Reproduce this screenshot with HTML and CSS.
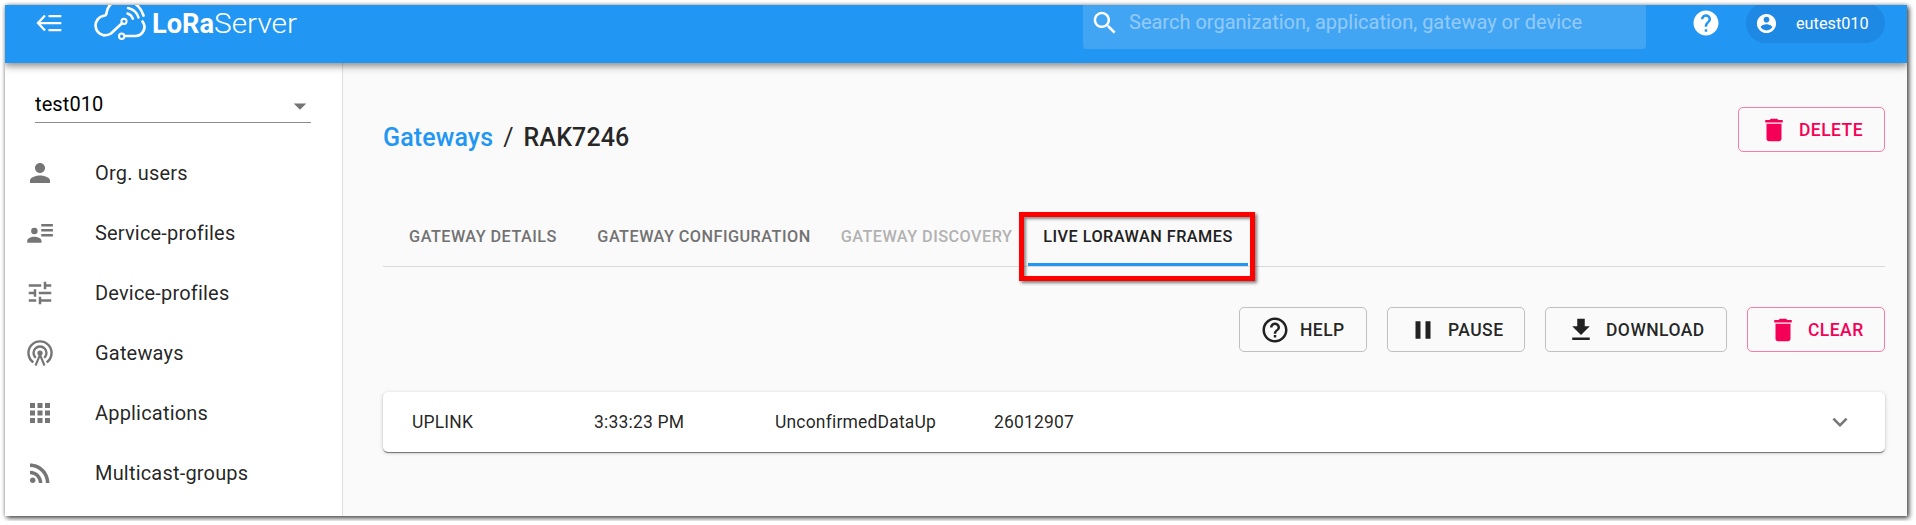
FILE: index.html
```html
<!DOCTYPE html>
<html lang="en">
<head>
<meta charset="utf-8">
<title>LoRaServer</title>
<link rel="stylesheet" href="styles.css">
</head>
<body>
<div class="window">
  <header class="topbar">
    <svg class="icon menu" viewBox="0 0 30 30" fill="none" stroke="#fff" stroke-width="2.3"><path d="M11 7.500L4 15l7 7.500M4 15.200H27.300M14.500 8.200H27.300M14.500 22.200H27.300"/></svg>
    <div class="logo">
      <svg class="cloud" viewBox="0 0 56 42" fill="none" stroke="#fff" stroke-linecap="round">
        <path stroke-width="2.700" d="M30 23.300L19 33.500Q16.500 35.300 12 35.300A9.900 9.900 0 0 1 11.500 15.800Q14.300 15.800 14.500 13C15.500 7 18.500 3 24 1.500C38 -1 48 4 51.500 15.500"/>
        <path stroke-width="2.700" d="M33 36H43.500A9 9 0 0 0 50.500 21.500"/>
        <path stroke-width="2.500" d="M35.500 13.500Q39.500 14.700 40.800 18.700M36 8Q44.500 10 46.500 17.500"/>
        <circle cx="32" cy="21.300" r="2.600" stroke-width="2"/><circle cx="29.700" cy="36.300" r="2.700" stroke-width="2"/>
      </svg>
      <svg class="wordmark" viewBox="0 0 146 34"><text class="word-bold" x="0" y="25.500" textLength="62" lengthAdjust="spacingAndGlyphs">LoRa</text><text class="word-light" x="62" y="25.500" textLength="83" lengthAdjust="spacingAndGlyphs">Server</text></svg>
    </div>
    <div class="search">
      <svg class="icon" viewBox="0 0 24 24"><path d="M15.500 14h-.79l-.28-.27C15.410 12.590 16 11.110 16 9.500 16 5.910 13.090 3 9.500 3S3 5.910 3 9.500 5.910 16 9.500 16c1.610 0 3.090-.59 4.230-1.570l.27.28v.79l5 4.990L20.490 19l-4.990-5zm-6 0C7.010 14 5 11.990 5 9.500S7.010 5 9.500 5 14 7.010 14 9.500 11.990 14 9.500 14z"/></svg>
      <span>Search organization, application, gateway or device</span>
    </div>
    <svg class="icon help" viewBox="0 0 24 24"><path d="M12 2C6.480 2 2 6.480 2 12s4.480 10 10 10 10-4.480 10-10S17.520 2 12 2zm1 17h-2v-2h2v2zm2.070-7.750l-.9.920C13.450 12.900 13 13.500 13 15h-2v-.5c0-1.100.45-2.100 1.170-2.830l1.240-1.260c.37-.36.59-.86.59-1.410 0-1.100-.9-2-2-2s-2 .9-2 2H8c0-2.210 1.790-4 4-4s4 1.790 4 4c0 .88-.36 1.680-.93 2.250z"/></svg>
    <div class="chip">
      <svg class="avatar" viewBox="0 0 24 24"><path d="M12 2C6.480 2 2 6.480 2 12s4.480 10 10 10 10-4.480 10-10S17.520 2 12 2zm0 3c1.660 0 3 1.340 3 3s-1.340 3-3 3-3-1.340-3-3 1.340-3 3-3zm0 14.200c-2.500 0-4.710-1.280-6-3.220.03-1.990 4-3.080 6-3.080 1.990 0 5.970 1.090 6 3.080-1.290 1.940-3.500 3.220-6 3.220z"/></svg>
      <span>eutest010</span>
    </div>
  </header>
  <div class="body">
    <nav class="sidebar">
      <div class="select"><span>test010</span><svg class="icon" viewBox="0 0 24 24"><path d="M7 10l5 5 5-5z"/></svg></div>
      <ul class="menu-list">
        <li><svg class="icon" viewBox="0 0 24 24"><path d="M12 12c2.210 0 4-1.790 4-4s-1.790-4-4-4-4 1.790-4 4 1.790 4 4 4zm0 2c-2.670 0-8 1.340-8 4v2h16v-2c0-2.660-5.330-4-8-4z"/></svg>Org. users</li>
        <li><svg class="icon" viewBox="0 0 24 24"><path d="M13 4.700h9.300v2H13zM13 8.700h9.300v2H13zM13 12.700h9.300v2H13zM7.500 7.700A2.600 2.600 0 1 0 7.500 12.900 2.600 2.600 0 1 0 7.500 7.700zM1.800 19.700v-1.600c0-2 3.700-3.100 5.700-3.100s5.700 1.100 5.700 3.100v1.600z"/></svg>Service-profiles</li>
        <li><svg class="icon" viewBox="0 0 24 24"><path d="M3 17v2h6v-2H3zM3 5v2h10V5H3zm10 16v-2h8v-2h-8v-2h-2v6h2zM7 9v2H3v2h4v2h2V9H7zm14 4v-2H11v2h10zm-6-4h2V7h4V5h-4V3h-2v6z"/></svg>Device-profiles</li>
        <li><svg class="icon" viewBox="0 0 24 24"><g fill="none" stroke="currentColor"><path stroke-width="1.900" d="M6.700 19.500A9.250 9.250 0 1 1 17.300 19.500M8.600 15.900A5.200 5.200 0 1 1 15.400 15.900"/><path stroke-width="1.700" d="M8.400 22L12 13.500 15.600 22"/></g><circle cx="12" cy="12" r="2.100"/></svg>Gateways</li>
        <li><svg class="icon" viewBox="0 0 24 24"><path d="M4 8h4V4H4v4zm6 12h4v-4h-4v4zm-6 0h4v-4H4v4zm0-6h4v-4H4v4zm6 0h4v-4h-4v4zm6-10v4h4V4h-4zm-6 4h4V4h-4v4zm6 6h4v-4h-4v4zm0 6h4v-4h-4v4z"/></svg>Applications</li>
        <li><svg class="icon" viewBox="0 0 24 24"><circle cx="6.180" cy="17.820" r="2.180"/><path d="M4 4.440v2.830c7.030 0 12.730 5.700 12.730 12.730h2.830c0-8.590-6.970-15.560-15.560-15.560zm0 5.660v2.830c3.900 0 7.070 3.170 7.070 7.070h2.830c0-5.470-4.430-9.900-9.900-9.900z"/></svg>Multicast-groups</li>
      </ul>
    </nav>
    <main class="content">
      <div class="title-row">
        <h1><a>Gateways</a><span class="slash">/</span>RAK7246</h1>
        <button class="btn danger w-delete"><svg class="icon" viewBox="0 0 24 24"><path d="M6 19c0 1.100.9 2 2 2h8c1.100 0 2-.9 2-2V7H6v12zM19 4h-3.500l-1-1h-5l-1 1H5v2h14V4z"/></svg>Delete</button>
      </div>
      <div class="tabs">
        <div class="tab t1">Gateway details</div>
        <div class="tab t2">Gateway configuration</div>
        <div class="tab t3">Gateway discovery</div>
        <div class="tab t4">Live LoRaWAN frames<div class="marker"></div></div>
      </div>
      <div class="actions">
        <button class="btn w-help"><svg class="icon" viewBox="0 0 24 24"><path d="M11 18h2v-2h-2v2zm1-16C6.480 2 2 6.480 2 12s4.480 10 10 10 10-4.480 10-10S17.520 2 12 2zm0 18c-4.410 0-8-3.590-8-8s3.590-8 8-8 8 3.590 8 8-3.590 8-8 8zm0-14c-2.210 0-4 1.790-4 4h2c0-1.100.9-2 2-2s2 .9 2 2c0 2-3 1.750-3 5h2c0-2.250 3-2.500 3-5 0-2.210-1.790-4-4-4z"/></svg>Help</button>
        <button class="btn w-pause"><svg class="icon" viewBox="0 0 24 24"><path d="M6 19h4V5H6v14zm8-14v14h4V5h-4z"/></svg>Pause</button>
        <button class="btn w-download"><svg class="icon" viewBox="0 0 24 24"><path d="M19 9h-4V3H9v6H5l7 7 7-7zM5 18v2h14v-2H5z"/></svg>Download</button>
        <button class="btn danger w-pause"><svg class="icon" viewBox="0 0 24 24"><path d="M6 19c0 1.100.9 2 2 2h8c1.100 0 2-.9 2-2V7H6v12zM19 4h-3.500l-1-1h-5l-1 1H5v2h14V4z"/></svg>Clear</button>
      </div>
      <div class="frame-row">
        <span>UPLINK</span><span>3:33:23 PM</span><span>UnconfirmedDataUp</span><span>26012907</span>
        <svg class="icon" viewBox="0 0 24 24"><path d="M16.590 8.590L12 13.170 7.410 8.590 6 10l6 6 6-6z"/></svg>
      </div>
    </main>
  </div>
</div>
</body>
</html>
```
FILE: styles.css
```css
*, *::after { box-sizing: border-box; }
body { margin: 0; padding: 5px; background: #fff; font-family: Roboto, "Liberation Sans", sans-serif; color: rgba(0,0,0,.87); overflow: hidden; }
.window { width: 1902px; height: 511px; overflow: hidden; background: #fafafa; display: flex; flex-direction: column; box-shadow: 2px 2px 5px rgba(0,0,0,.7), 0 0 4px rgba(0,0,0,.3); }
.icon { width: 30px; height: 30px; fill: currentColor; flex: none; }

.topbar { position: relative; z-index: 1; height: 58px; flex: none; display: flex; align-items: flex-start; background: #2196f3; color: #fff; box-shadow: 0 2px 5px rgba(0,0,0,.22), 0 5px 6px rgba(0,0,0,.16), 0 1px 12px rgba(0,0,0,.14); }
.topbar .menu { margin: 3px 0 0 29px; fill: none; }
.logo { display: flex; margin-left: 28px; }
.cloud { width: 56px; height: 42px; margin-top: -5px; }
.wordmark { width: 146px; height: 34px; margin-left: 4px; margin-top: 2px; fill: #fff; font-family: Roboto, sans-serif; font-size: 28px; }
.word-bold { font-weight: 700; }
.word-light { font-weight: 300; }
.search { width: 563px; height: 44px; margin-left: 785px; padding: 0 0 0 8px; display: flex; background: rgba(255,255,255,.15); border-radius: 0 0 4px 4px; font-size: 20px; line-height: 34px; }
.search .icon { width: 30px; height: 30px; margin: 3px 8px 0 -1px; }
.search span { opacity: .42; margin-left: 1px; }
.help { margin: 3px 0 0 45px; }
.chip { width: 139px; height: 40px; margin: -2px 0 0 25px; padding-left: 9px; border-radius: 20px; background: #1e88e5; display: flex; align-items: center; font-size: 16.250px; }
.avatar { width: 23px; height: 23px; fill: #fff; margin-right: 18px; }

.body { flex: 1; display: flex; min-height: 0; }
.sidebar { width: 338px; background: #fff; border-right: 1px solid #e0e0e0; }
.select { margin: 19px 31px 0 30px; height: 41px; padding-top: 4px; display: flex; align-items: center; justify-content: space-between; border-bottom: 1px solid #8c8c8c; font-size: 20px; letter-spacing: .1px; color: #000; }
.select .icon { color: #757575; margin: 3px -4px 0 0; }
.menu-list { list-style: none; margin: 20px 0 0; padding: 0; }
.menu-list li { height: 60px; padding-left: 20px; display: flex; align-items: center; gap: 40px; font-size: 20px; letter-spacing: .188px; }
.menu-list .icon { color: #757575; }

.content { flex: 1; padding: 44px 22px 0 40px; }
.title-row { display: flex; justify-content: space-between; align-items: flex-start; height: 100px; }
h1 { margin: 15px 0 0; font-size: 25px; line-height: 32px; font-weight: 500; letter-spacing: .120px; }
h1 a { color: #2196f3; }
.slash { margin: 0 10px; font-weight: 400; }
.btn { height: 45px; display: flex; align-items: center; gap: 10px; padding: 0 0 0 20px; border: 1px solid rgba(0,0,0,.23); border-radius: 5px; background: none; font: 500 17.500px/30px Roboto, sans-serif; letter-spacing: .450px; text-transform: uppercase; color: rgba(0,0,0,.87); }
.btn.danger { color: #f50057; border-color: rgba(245,0,87,.5); }
.w-delete { width: 147px; }
.w-help { width: 128px; }
.w-pause { width: 138px; }
.w-download { width: 182px; }

.tabs { height: 60px; display: flex; border-bottom: 1px solid #dadada; }
.tab { flex: none; height: 59px; text-align: center; font-size: 16.250px; line-height: 59px; font-weight: 500; letter-spacing: .464px; text-transform: uppercase; color: #727272; }
.t1 { width: 200px; } .t2 { width: 242px; } .t3 { width: 203px; color: #b2b2b2; }
.t4 { position: relative; width: 220px; color: #212121; }
.t4::after { content: ""; position: absolute; left: -9px; top: 5px; width: 236px; height: 69px; border: 5px solid red; box-shadow: 2px 2px 3px rgba(0,0,0,.5), inset 2px 2px 3px rgba(0,0,0,.45); }
.marker { height: 3px; margin-top: -3px; background: #2196f3; }
.actions { display: flex; justify-content: flex-end; gap: 20px; margin-top: 40px; }
.frame-row { margin-top: 40px; height: 60px; padding: 0 30px 0 29px; display: grid; grid-template-columns: 182px 181px 219px 1fr 30px; align-items: center; background: #fff; border-radius: 5px; font-size: 17.500px; letter-spacing: .180px; box-shadow: 0 1px 4px rgba(0,0,0,.2), 0 1px 1px rgba(0,0,0,.24), 0 2px 1px -1px rgba(0,0,0,.3); }
.frame-row .icon { color: #757575; }
```
